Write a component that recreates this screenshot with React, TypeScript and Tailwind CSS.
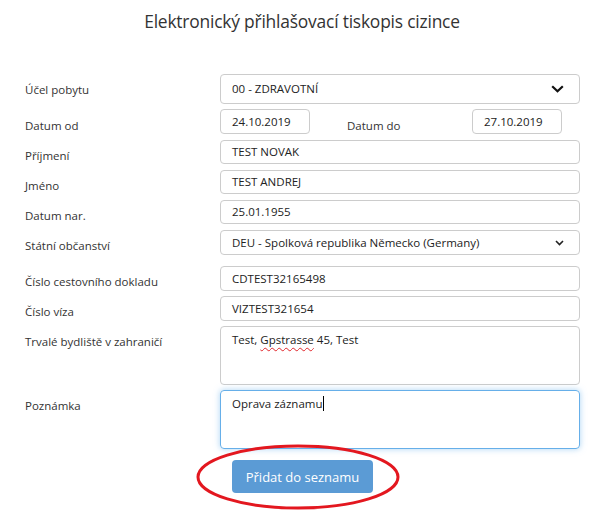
import React from 'react';

const labelCls = "w-[195px] shrink-0 pt-[8px] text-[11.5px] leading-[16px] text-[#333]";
const boxCls = "border border-[#ccc] rounded-[4px] bg-white px-[11px] text-[11.5px] text-[#222] flex items-center";

function Chevron({ small }: { small?: boolean }) {
  if (small) {
    return (
      <svg width="9" height="6" viewBox="0 0 9 6" className="mr-[4px]">
        <path d="M1 1 L4.5 4.5 L8 1" fill="none" stroke="#222" strokeWidth="1.6" />
      </svg>
    );
  }
  return (
    <svg width="13" height="8" viewBox="0 0 13 8" className="mr-[4px]">
      <path d="M1.2 1.2 L6.5 6.3 L11.8 1.2" fill="none" stroke="#111" strokeWidth="2.2" />
    </svg>
  );
}

function Row({ label, mt, children }: { label: string; mt: string; children: React.ReactNode }) {
  return (
    <div className={`flex ${mt}`}>
      <div className={labelCls}>{label}</div>
      {children}
    </div>
  );
}

export default function App() {
  return (
    <div className="w-[594px] h-[519px] bg-white font-['Open_Sans',sans-serif] text-[#333] overflow-hidden">
      <h1 className="pt-[8px] pl-[10px] text-center text-[17.4px] leading-[26px] font-normal text-[#333] tracking-[-0.2px]">
        Elektronický přihlašovací tiskopis cizince
      </h1>

      <div className="pl-[25px] mt-[40px]">
        {/* Účel pobytu */}
        <Row label="Účel pobytu" mt="mt-0">
          <div className={`${boxCls} w-[360px] h-[30px] justify-between`}>
            <span>00 - ZDRAVOTNÍ</span>
            <Chevron />
          </div>
        </Row>

        {/* Datum od / do */}
        <div className="flex mt-[5px] h-[25px]">
          <div className="w-[195px] shrink-0 pt-[9px] text-[11.5px] leading-[16px] text-[#333]">Datum od</div>
          <div className={`${boxCls} w-[90px] h-[25px]`}>24.10.2019</div>
          <div className="w-[162px] pl-[37px] pt-[9px] text-[11.5px] leading-[16px] text-[#333]">Datum do</div>
          <div className={`${boxCls} w-[90px] h-[25px]`}>27.10.2019</div>
        </div>

        <Row label="Příjmení" mt="mt-[6px]">
          <div className={`${boxCls} w-[360px] h-[24px]`}>TEST NOVAK</div>
        </Row>
        <Row label="Jméno" mt="mt-[6px]">
          <div className={`${boxCls} w-[360px] h-[24px]`}>TEST ANDREJ</div>
        </Row>
        <Row label="Datum nar." mt="mt-[6px]">
          <div className={`${boxCls} w-[360px] h-[24px]`}>25.01.1955</div>
        </Row>
        <Row label="Státní občanství" mt="mt-[6px]">
          <div className={`${boxCls} w-[360px] h-[25px] justify-between`}>
            <span>DEU - Spolková republika Německo (Germany)</span>
            <Chevron small />
          </div>
        </Row>

        <Row label="Číslo cestovního dokladu" mt="mt-[11px]">
          <div className={`${boxCls} w-[360px] h-[25px]`}>CDTEST32165498</div>
        </Row>
        <Row label="Číslo víza" mt="mt-[5px]">
          <div className={`${boxCls} w-[360px] h-[25px]`}>VIZTEST321654</div>
        </Row>

        <Row label="Trvalé bydliště v zahraničí" mt="mt-[5px]">
          <div className="w-[360px] h-[59px] border border-[#ccc] rounded-[4px] px-[11px] pt-[5px] text-[11.5px] leading-[16px] text-[#222]">
            Test, <span className="underline decoration-wavy decoration-[#e0262b] decoration-[1px] underline-offset-[3px]">Gpstrasse</span> 45, Test
          </div>
        </Row>

        <Row label="Poznámka" mt="mt-[5px]">
          <div className="w-[360px] h-[59px] border border-[#66afe9] rounded-[4px] shadow-[0_0_6px_rgba(102,175,233,0.55)] px-[11px] pt-[5px] text-[11.5px] leading-[16px] text-[#222]">
            Oprava záznamu<span className="inline-block w-px h-[15px] bg-black align-[-3px]" />
          </div>
        </Row>

        <div className="mt-[11px] ml-[207px] relative w-[141px]">
          <button className="w-[141px] h-[33px] rounded-[4px] bg-[#5b9bd5] text-white text-[13px] leading-[20px]">
            Přidat do seznamu
          </button>
          <svg
            className="absolute left-[-37px] top-[-16px] pointer-events-none"
            width="206"
            height="68"
            viewBox="0 0 206 68"
          >
            <ellipse cx="103" cy="33" rx="100" ry="31" fill="none" stroke="#e3171f" strokeWidth="3" />
          </svg>
        </div>
      </div>
    </div>
  );
}
